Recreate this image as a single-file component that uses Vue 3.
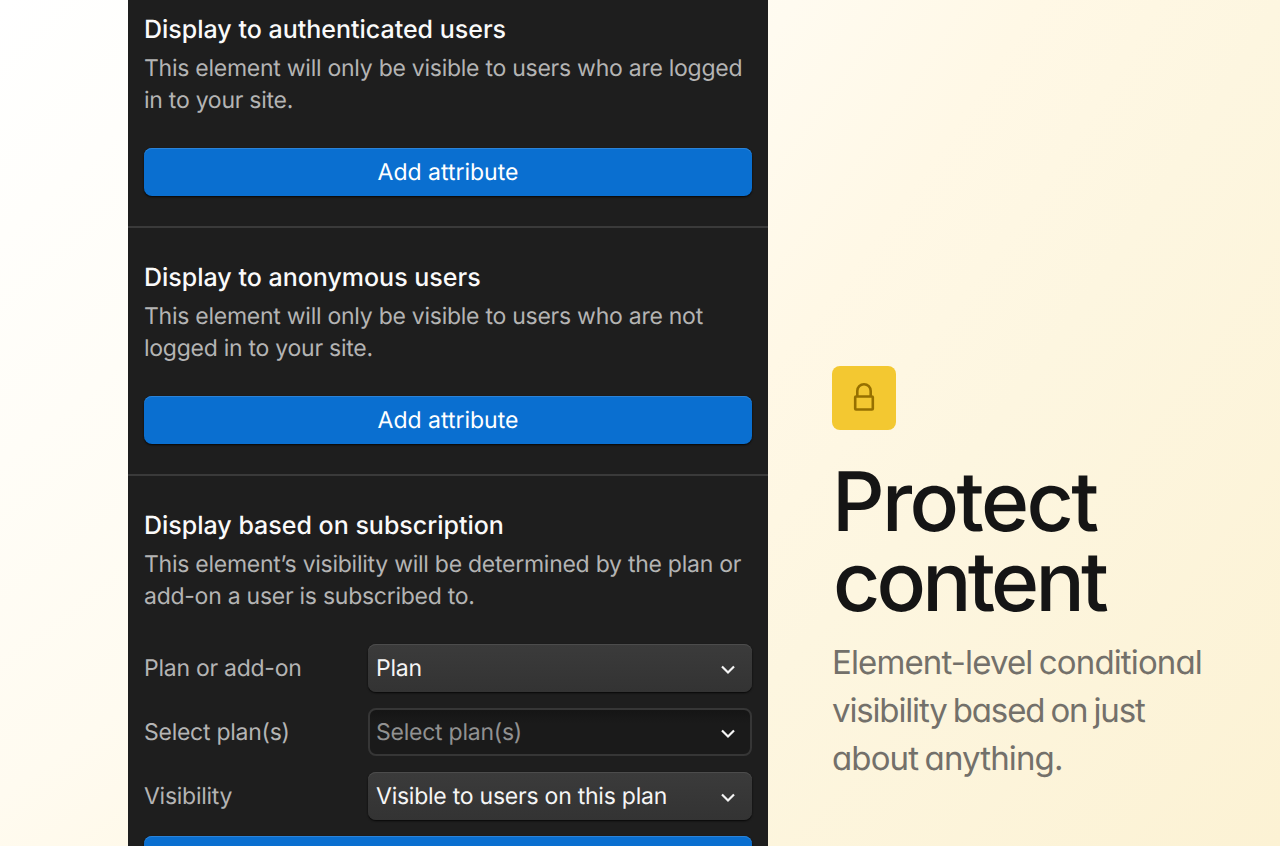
<template>
  <main class="page">
    <aside class="panel">
      <section v-for="item in sections" :key="item.title" class="section">
        <h2>{{ item.title }}</h2>
        <p class="description">
          <span v-for="line in item.lines" :key="line">{{ line }}</span>
        </p>

        <div v-if="item.fields" class="fields">
          <div v-for="field in item.fields" :key="field.label" class="field">
            <span class="label">{{ field.label }}</span>
            <button type="button" class="select" :class="{ empty: field.empty }">
              <span>{{ field.value }}</span>
              <svg width="16" height="16" viewBox="0 0 16 16" fill="none">
                <path d="M2 5.5 8 11.5 14 5.5" stroke="#f5f5f5" stroke-width="2.2" />
              </svg>
            </button>
          </div>
        </div>

        <button v-if="item.fields" type="button" class="primary"></button>
        <button v-else type="button" class="primary">Add attribute</button>
      </section>
    </aside>

    <div class="intro">
      <div class="badge">
        <svg width="32" height="32" viewBox="0 0 32 32" fill="none">
          <path d="M9.3 14.5V8.9a6.7 6.7 0 0 1 13.4 0v5.6" />
          <rect x="7.2" y="14.5" width="17.6" height="13" rx="0.8" />
        </svg>
      </div>
      <h1>
        <span>Protect</span>
        <span class="tight">content</span>
      </h1>
      <p class="tagline">
        <span>Element-level conditional</span>
        <span class="tight">visibility based on just</span>
        <span>about anything.</span>
      </p>
    </div>
  </main>
</template>

<script setup>
const sections = [
  {
    title: 'Display to authenticated users',
    lines: ['This element will only be visible to users who are logged', 'in to your site.']
  },
  {
    title: 'Display to anonymous users',
    lines: ['This element will only be visible to users who are not', 'logged in to your site.']
  },
  {
    title: 'Display based on subscription',
    lines: ['This element’s visibility will be determined by the plan or', 'add-on a user is subscribed to.'],
    fields: [
      { label: 'Plan or add-on', value: 'Plan' },
      { label: 'Select plan(s)', value: 'Select plan(s)', empty: true },
      { label: 'Visibility', value: 'Visible to users on this plan' }
    ]
  }
];
</script>

<style>
body {
  margin: 0;
  overflow: hidden;
}
</style>

<style scoped>
.page {
  display: flex;
  height: 846px;
  padding-left: 128px;
  box-sizing: border-box;
  overflow: hidden;
  background: radial-gradient(
    circle at -1700px -1700px,
    #ffffff 2404px,
    #fffdf7 2750px,
    #fffbf0 3020px,
    #fff8e6 3220px,
    #fdf6e0 3430px,
    #fcf2d4 3920px
  );
  font-family: Inter, 'Liberation Sans', sans-serif;
  text-rendering: geometricPrecision;
}

h1,
h2,
p {
  margin: 0;
}

h1 span,
p span {
  display: block;
  white-space: nowrap;
}

.panel {
  width: 640px;
  height: 866px;
  margin-top: -20px;
  flex: none;
  background: #1e1e1e;
}

.section {
  padding: 33px 16px 30px;
  border-bottom: 2px solid #3a3a3a;
}

h2 {
  color: #fafafa;
  font-size: 25px;
  font-weight: 500;
  line-height: 34px;
}

.description {
  margin: 5px 0 32px;
  color: #b4b4b4;
  font-size: 23px;
  line-height: 32px;
  letter-spacing: -0.26px;
}

.fields {
  display: flex;
  flex-direction: column;
  gap: 16px;
  margin-bottom: 16px;
}

.field {
  display: flex;
  align-items: center;
}

.label {
  width: 224px;
  color: #b4b4b4;
  font-size: 23px;
  letter-spacing: -0.26px;
}

button {
  box-sizing: border-box;
  height: 48px;
  border: 0;
  border-radius: 8px;
  font-family: inherit;
  font-size: 23px;
  text-rendering: inherit;
}

.select {
  display: flex;
  flex: 1;
  align-items: center;
  justify-content: space-between;
  padding: 0 16px 0 8px;
  background: linear-gradient(#3b3b3b, #333333);
  box-shadow: inset 0 1px 0 #4c4c4c, 0 1px 2px rgba(0, 0, 0, 0.8);
  color: #f5f5f5;
  letter-spacing: -0.24px;
}

.select svg {
  margin-top: 2px;
}

.select.empty {
  padding: 0 14px 0 6px;
  border: 2px solid #363636;
  background: linear-gradient(#151515, #1a1a1a 30%);
  box-shadow: none;
  color: #919191;
}

.primary {
  display: block;
  width: 100%;
  background: #0a6fd0;
  box-shadow: inset 0 1px 0 #2b83d8, 0 1px 2px rgba(0, 0, 0, 0.8);
  color: #ffffff;
}

.intro {
  padding: 366px 0 0 64px;
  font-feature-settings: 'cv11';
}

.badge {
  display: flex;
  align-items: center;
  justify-content: center;
  width: 64px;
  height: 64px;
  border-radius: 8px;
  background: #f3c831;
}

.badge svg {
  stroke: #967000;
  stroke-width: 2.6;
}

h1 {
  margin-top: 32px;
  color: #151515;
  font-size: 82px;
  font-weight: 500;
  line-height: 80px;
  letter-spacing: -2.6px;
}

h1 .tight {
  padding-left: 1px;
  letter-spacing: -3.8px;
}

.tagline {
  margin-top: 16px;
  color: #73706a;
  font-size: 33px;
  line-height: 48px;
  letter-spacing: -0.87px;
  word-spacing: -2px;
}

.tagline .tight {
  letter-spacing: -1.15px;
}
</style>
